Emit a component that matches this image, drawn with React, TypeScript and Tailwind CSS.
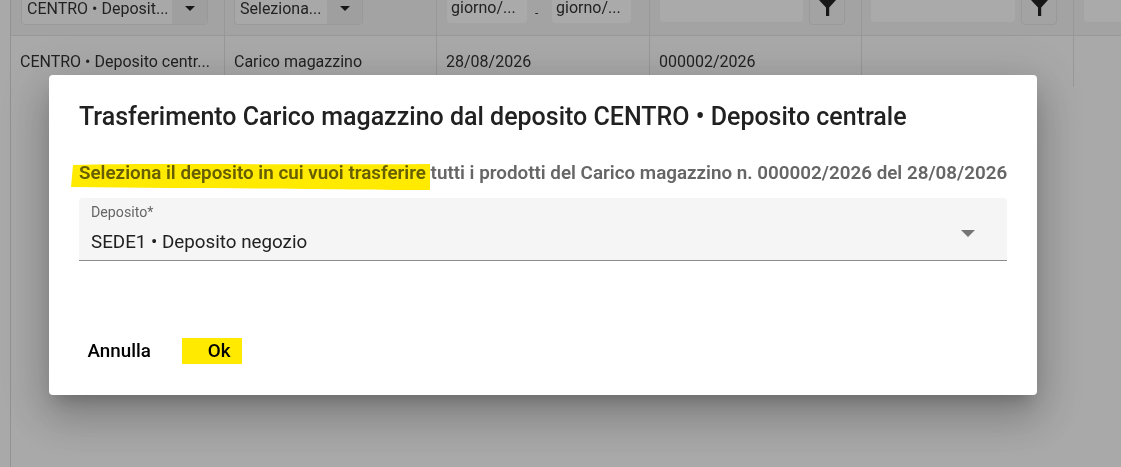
const font = { fontFamily: "Roboto, sans-serif" };

function Triangle({ className }: { className: string }) {
  return (
    <svg viewBox="0 0 10 5" className={className}>
      <path d="M0 0h10L5 5z" fill="currentColor" />
    </svg>
  );
}

function FilterSelect({ label, width }: { label: string; width: string }) {
  return (
    <div className={`flex h-[36px] items-center overflow-hidden rounded border border-[#e2e2e2] bg-[#f8f8f8] ${width}`}>
      <span className="flex-1 truncate pl-[5px] pt-[3px] text-[16px] text-[#333]">{label}</span>
      <span className="flex h-full w-[35px] items-center justify-center bg-[#ebebeb] pt-[3px]">
        <Triangle className="h-[7px] w-[10px] text-[#222]" />
      </span>
    </div>
  );
}

function FilterInput({ width, label }: { width: string; label?: string }) {
  return (
    <div className={`flex h-[34px] items-center rounded bg-[#fbfbfb] px-[4px] pt-[3px] text-[16px] text-[#333] ${width}`}>
      {label}
    </div>
  );
}

function FilterButton() {
  return (
    <div className="flex h-[36px] w-[36px] items-center justify-center rounded border border-[#e2e2e2]">
      <svg viewBox="0 0 16 16" className="h-[17px] w-[17px] text-[#222]">
        <path d="M0 1h16L9.6 8v8H6.6V8z" fill="currentColor" />
      </svg>
    </div>
  );
}

export default function App() {
  return (
    <div className="relative h-[467px] w-[1121px] overflow-hidden bg-[#fafafa]" style={font}>
      {/* table behind the dialog */}
      <div className="ml-[10px] h-full border-l border-[#d8d8d8]">
        <div className="flex h-[36px] items-end border-b border-[#e0e0e0] bg-[#f0f0f0]">
          <div className="flex h-full w-[214px] shrink-0 items-end border-r border-[#e0e0e0] pb-[10px] pl-[10px]">
            <FilterSelect label="CENTRO • Deposit..." width="w-[187px]" />
          </div>
          <div className="flex h-full w-[212px] shrink-0 items-end border-r border-[#e0e0e0] pb-[10px] pl-[9px]">
            <FilterSelect label="Seleziona..." width="w-[129px]" />
          </div>
          <div className="flex h-full w-[213px] shrink-0 items-end border-r border-[#e0e0e0] pb-[12px] pl-[10px]">
            <FilterInput width="w-[80px]" label="giorno/..." />
            <span className="mb-[1px] ml-[8px] w-[17px] text-[12px] text-[#333]">-</span>
            <FilterInput width="w-[79px]" label="giorno/..." />
          </div>
          <div className="flex h-full w-[212px] shrink-0 items-end gap-[6px] border-r border-[#e0e0e0] pb-[10px] pl-[10px]">
            <FilterInput width="w-[143px] mb-[3px]" />
            <FilterButton />
          </div>
          <div className="flex h-full w-[212px] shrink-0 items-end gap-[6px] border-r border-[#e0e0e0] pb-[10px] pl-[9px]">
            <FilterInput width="w-[144px] mb-[3px]" />
            <FilterButton />
          </div>
          <div className="flex h-full flex-1 items-end pb-[13px] pl-[10px]">
            <FilterInput width="w-[60px]" />
          </div>
        </div>
        <div className="flex h-[51px] text-[16px] leading-[20px] text-[#333]">
          <div className="w-[214px] shrink-0 truncate border-r border-[#e0e0e0] pl-[9px] pt-[16px]">CENTRO • Deposito centr...</div>
          <div className="w-[212px] shrink-0 border-r border-[#e0e0e0] pl-[9px] pt-[16px]">Carico magazzino</div>
          <div className="w-[213px] shrink-0 border-r border-[#e0e0e0] pl-[9px] pt-[16px]">28/08/2026</div>
          <div className="w-[212px] shrink-0 border-r border-[#e0e0e0] pl-[9px] pt-[16px]">000002/2026</div>
          <div className="w-[212px] shrink-0 border-r border-[#e0e0e0]" />
        </div>
      </div>

      {/* dialog */}
      <div className="absolute inset-0 bg-black/[0.32] pl-[49px] pt-[75px]">
        <div className="relative flex h-[320px] w-[988px] flex-col rounded bg-white px-[30px] shadow-[0_11px_15px_-7px_rgba(0,0,0,0.2),0_24px_38px_3px_rgba(0,0,0,0.14),0_9px_46px_8px_rgba(0,0,0,0.12)]">
          <h2 className="mt-[25px] whitespace-nowrap text-[25px] font-medium leading-[34px] text-[#212121]">
            Trasferimento Carico magazzino dal deposito CENTRO • Deposito centrale
          </h2>
          <p className="mt-[27px] whitespace-nowrap text-[18.82px] font-semibold leading-[24px] text-[#666666]">
            Seleziona il deposito in cui vuoi trasferire tutti i prodotti del Carico magazzino n. 000002/2026 del 28/08/2026
          </p>
          <div className="mt-[13px] flex h-[63px] items-center rounded-t border-b border-[#8c8c8c] bg-[#f5f5f5] pl-[12px] pr-[32px]">
            <div className="flex-1">
              <div className="text-[14.2px] leading-[16px] text-[#666666]">Deposito*</div>
              <div className="mt-[10px] text-[18.8px] leading-[24px] text-[#212121]">SEDE1 • Deposito negozio</div>
            </div>
            <Triangle className="mt-[9px] h-[7px] w-[14px] text-[#757575]" />
          </div>
          <div className="mt-[77px] flex items-center">
            <button className="ml-[8.5px] text-[18.8px] font-medium leading-[26px] text-black">Annulla</button>
            <button className="ml-[31px] h-[26px] w-[60px] bg-[#ffea00] pl-[26px] text-left text-[18.8px] font-medium leading-[24px] text-black">Ok</button>
          </div>

          {/* marker highlight */}
          <svg viewBox="0 0 360 28" className="pointer-events-none absolute left-[22px] top-[88px] h-[28px] w-[360px] mix-blend-multiply">
            <path d="M2 2C80 0 200 2 359 1V27C300 27 200 25 100 25L0 24z" fill="#ffea00" />
          </svg>
        </div>
      </div>
    </div>
  );
}
